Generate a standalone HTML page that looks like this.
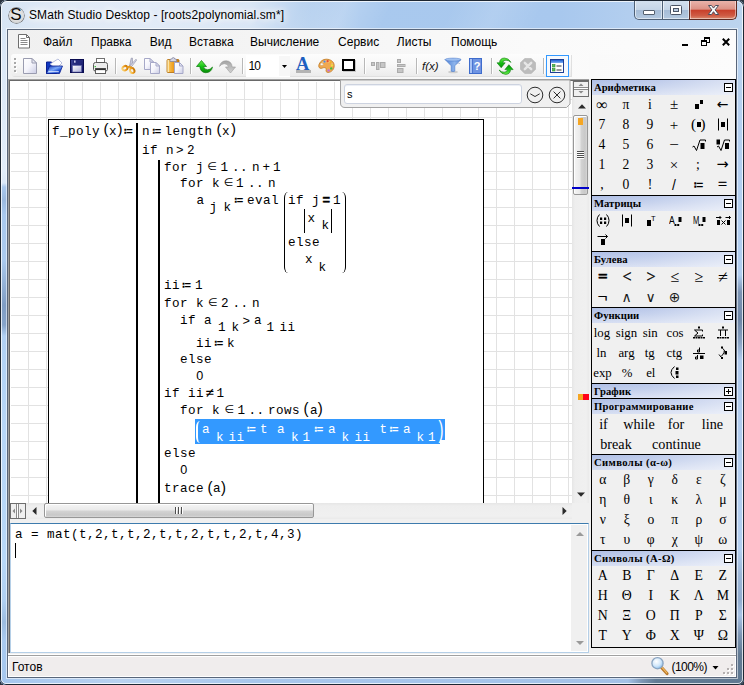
<!DOCTYPE html>
<html lang="ru"><head><meta charset="utf-8"><title>SMath Studio Desktop - [roots2polynomial.sm*]</title>
<style>
html,body{margin:0;padding:0;width:744px;height:685px;overflow:hidden;background:#2b3440;}
body{position:relative;font-family:"Liberation Sans",sans-serif;font-size:12px;color:#000;}
.a{position:absolute;}
.t{position:absolute;white-space:pre;line-height:16px;}
#win{left:0;top:0;width:744px;height:685px;border-radius:7px 7px 6px 6px;overflow:hidden;background:#a9c9ee;}
#content{left:8px;top:30px;width:728px;height:647px;background:#f0f0f0;}
.ui{font-family:"Liberation Sans",sans-serif;font-size:12px;}
.mono{font-family:"Liberation Mono",monospace;font-size:12.6px;letter-spacing:0.44px;}
.asg{font-family:"DejaVu Sans Mono",monospace;font-size:15px;}
.elm{font-family:"DejaVu Sans",sans-serif;font-size:11px;}
.neq{font-family:"DejaVu Sans Mono",monospace;font-size:14px;}
.par{font-family:"Liberation Sans",sans-serif;font-size:15px;line-height:16px;transform-origin:0 0;}
.ser{font-family:"Liberation Serif",serif;font-size:13.6px;line-height:20px;text-align:center;}
.hd{font-family:"Liberation Serif",serif;font-weight:bold;font-size:10.67px;line-height:15px;}
.ph{position:absolute;left:592px;width:143px;height:15px;background:linear-gradient(90deg,rgba(255,255,255,0) 0%,rgba(255,255,255,.15) 40%,rgba(255,255,255,.55) 100%),linear-gradient(180deg,#afbfe6 0%,#bccaea 40%,#d6def2 100%);border-top:1px solid #000;}
.bx{position:absolute;left:724px;width:7px;height:7px;border:1px solid #000;background:#fff;}
.bx i{position:absolute;left:1px;top:3px;width:5px;height:1px;background:#000;}
.bx b{position:absolute;left:3px;top:1px;width:1px;height:5px;background:#000;}
</style></head><body>
<div id="win" class="a">
<div class="a" style="left:0;top:0;width:744px;height:30px;background:linear-gradient(90deg,#d6e4f4 0px,#e0eaf6 60px,#e2ebf7 150px,#d9e6f5 250px,#b7d1ef 310px,#a9c9ee 360px,#a8c8ee 560px,#b4cfef 640px,#bcd4ee 744px);"></div>
<div class="a" style="left:0;top:0;width:744px;height:30px;background:linear-gradient(115deg,rgba(255,255,255,0) 40%,rgba(255,255,255,.18) 46%,rgba(255,255,255,0) 52%,rgba(255,255,255,0) 60%,rgba(255,255,255,.12) 66%,rgba(255,255,255,0) 72%);"></div>
<div class="a" style="left:0;top:30px;width:8px;height:655px;background:linear-gradient(180deg,#d8e6f6 0px,#dde9f7 60px,#e2edf9 140px,#dbe8f7 153px,#a9c8ec 157px,#9bb9de 170px,#a9c9ee 185px,#aacaee 230px,#93b1d6 255px,#7f9dc4 275px,#86a4ca 295px,#b1d1f4 306px,#b7d6f7 400px,#b8d8f8 530px,#b0d0f2 570px,#9cbce0 592px,#a9caf0 610px,#a5c7ee 655px);"></div>
<div class="a" style="left:736px;top:30px;width:8px;height:655px;background:linear-gradient(180deg,#bcd4ee 0px,#b4cff0 100px,#b2cef0 245px,#7c94b4 262px,#6f87a8 290px,#8aa3c4 312px,#b0cbee 330px,#b4cff0 520px,#9db7d8 545px,#93aed0 570px,#a9c4e6 585px,#7d96b4 605px,#627a93 625px,#5f7891 655px);"></div>
<div class="a" style="left:0;top:677px;width:744px;height:8px;background:linear-gradient(90deg,#a5c6ee 0px,#b9d2f0 120px,#a9c7ec 250px,#a6c4ea 500px,#a4c1e6 628px,#7d96b4 642px,#627b94 656px,#5f7891 744px);"></div>
<div class="a" style="left:0;top:0;width:742px;height:683px;border:1px solid #1d2733;border-radius:7px 7px 6px 6px;"></div>
<div class="a" style="left:1px;top:1px;width:740px;height:681px;border:1px solid rgba(255,255,255,.75);border-radius:6px 6px 5px 5px;"></div>
<div class="a" style="left:6px;top:28px;width:730px;height:649px;border:1px solid rgba(255,255,255,.55);"></div>
<div class="a" style="left:7px;top:29px;width:728px;height:647px;border:1px solid #59667a;"></div>
<div class="a" style="left:8.500px;top:7.500px;width:15px;height:15px;border-radius:50%;background:radial-gradient(circle at 50% 45%,#ececec 0%,#dcdcdc 60%,#b4b4b4 100%);box-shadow:0 0 0 0.700px #6e6e6e;"></div>
<span class="t" style="left:10.300px;top:5px;font:17px/20px 'Liberation Sans',sans-serif;color:#0a0a0a;">S</span>
<span class="t ui" style="left:29px;top:7px;letter-spacing:0.08px;text-shadow:0 0 6px #fff,0 0 9px #fff,0 0 12px rgba(255,255,255,.9);">SMath Studio Desktop - [roots2polynomial.sm*]</span>
<div class="a" style="left:634px;top:1px;width:29px;height:19px;border:1px solid #4e6076;border-top:none;box-sizing:border-box;border-radius:0 0 0 5px;background:linear-gradient(180deg,#d3e0ee 0%,#c5d5e7 48%,#a6bcd6 52%,#b4c9e0 100%);box-shadow:inset 1px 0 0 rgba(255,255,255,.6),inset -1px -1px 0 rgba(255,255,255,.5);"></div>
<div class="a" style="left:662px;top:1px;width:28px;height:19px;border:1px solid #4e6076;border-top:none;box-sizing:border-box;background:linear-gradient(180deg,#d3e0ee 0%,#c5d5e7 48%,#a6bcd6 52%,#b4c9e0 100%);box-shadow:inset 1px 0 0 rgba(255,255,255,.6),inset -1px -1px 0 rgba(255,255,255,.5);"></div>
<div class="a" style="left:689px;top:1px;width:48px;height:19px;border:1px solid #5c2a22;border-top:none;box-sizing:border-box;border-radius:0 0 5px 0;background:linear-gradient(180deg,#e9b3aa 0%,#dc9286 45%,#c8402b 52%,#cf5a43 80%,#d98a6e 100%);box-shadow:inset 1px 0 0 rgba(255,255,255,.45),inset -1px -1px 0 rgba(255,255,255,.45);"></div>
<div class="a" style="left:643px;top:10px;width:10px;height:3px;background:#fff;border:1px solid #55606e;border-radius:1px;"></div>
<svg class="a" style="left:669px;top:4px" width="14" height="12" viewBox="0 0 14 12"><rect x="1.500" y="1.500" width="11" height="9" rx="1" fill="#fff" stroke="#4b5566"/><rect x="4.500" y="4.500" width="5" height="3" fill="#b9cbe0" stroke="#4b5566"/></svg>
<svg class="a" style="left:706px;top:4px" width="15" height="12" viewBox="0 0 15 12"><path d="M2.5 1.5h3l2 2.6 2-2.6h3l-3.4 4.4 3.6 4.6h-3.2l-2-2.8-2 2.8h-3.2l3.6-4.6z" fill="#fff" stroke="#4b4f5c" stroke-width="1"/></svg>
<div id="content" class="a"></div>
<div class="a" style="left:8px;top:30px;width:728px;height:49px;background:linear-gradient(90deg,#f0f0f0 0,#f3f3f3 200px,#fafafa 520px,#fcfcfc 728px);"></div>
<svg class="a" style="left:18px;top:34px" width="13" height="15" viewBox="0 0 13 15"><path d="M0.5 0.5h8l3 3v10.5h-11z" fill="#fff" stroke="#6e6e6e"/><path d="M8.5 0.5v3h3" fill="none" stroke="#6e6e6e"/><path d="M2.5 4.5h5M2.5 6.5h7M2.5 8.5h7M2.5 10.5h7" stroke="#8a8a8a"/></svg>
<span class="t ui" style="left:42.9px;top:34px;">Файл</span>
<span class="t ui" style="left:91.0px;top:34px;">Правка</span>
<span class="t ui" style="left:149.8px;top:34px;">Вид</span>
<span class="t ui" style="left:189.1px;top:34px;">Вставка</span>
<span class="t ui" style="left:250.0px;top:34px;">Вычисление</span>
<span class="t ui" style="left:338.1px;top:34px;">Сервис</span>
<span class="t ui" style="left:396.8px;top:34px;">Листы</span>
<span class="t ui" style="left:451.0px;top:34px;">Помощь</span>
<div class="a" style="left:682px;top:44px;width:6px;height:2px;background:#000;"></div>
<div class="a" style="left:704px;top:37px;width:4px;height:3px;border:1px solid #000;border-top:2px solid #000;"></div>
<div class="a" style="left:701px;top:40px;width:4px;height:3px;border:1px solid #000;border-top:2px solid #000;background:#fafafa;"></div>
<svg class="a" style="left:722px;top:38px" width="8" height="8" viewBox="0 0 8 8"><path d="M0.800 0.800l6.400 6.400M7.200 0.800l-6.400 6.400" stroke="#000" stroke-width="2"/></svg>
<div class="a" style="left:11px;top:54px;width:560px;height:22px;border-radius:3px 0 0 3px;background:linear-gradient(180deg,#fdfdfd 0%,#f8f8f8 45%,#ececec 100%);box-shadow:1px 1px 0 #e0e0e0;"></div>
<div class="a" style="left:14px;top:58px;width:2px;height:2px;background:#a8a8a8;box-shadow:1px 1px 0 #fff;"></div>
<div class="a" style="left:14px;top:62px;width:2px;height:2px;background:#a8a8a8;box-shadow:1px 1px 0 #fff;"></div>
<div class="a" style="left:14px;top:66px;width:2px;height:2px;background:#a8a8a8;box-shadow:1px 1px 0 #fff;"></div>
<div class="a" style="left:14px;top:70px;width:2px;height:2px;background:#a8a8a8;box-shadow:1px 1px 0 #fff;"></div>
<div class="a" style="left:115px;top:58px;width:1px;height:16px;background:#b8b8b8;box-shadow:1px 0 0 #fff;"></div>
<div class="a" style="left:190px;top:58px;width:1px;height:16px;background:#b8b8b8;box-shadow:1px 0 0 #fff;"></div>
<div class="a" style="left:242px;top:58px;width:1px;height:16px;background:#b8b8b8;box-shadow:1px 0 0 #fff;"></div>
<div class="a" style="left:364px;top:58px;width:1px;height:16px;background:#b8b8b8;box-shadow:1px 0 0 #fff;"></div>
<div class="a" style="left:416px;top:58px;width:1px;height:16px;background:#b8b8b8;box-shadow:1px 0 0 #fff;"></div>
<div class="a" style="left:491px;top:58px;width:1px;height:16px;background:#b8b8b8;box-shadow:1px 0 0 #fff;"></div>
<div class="a" style="left:543px;top:58px;width:1px;height:16px;background:#b8b8b8;box-shadow:1px 0 0 #fff;"></div>
<svg class="a" width="0" height="0"><defs><linearGradient id="gpage" x1="0" y1="0" x2="1" y2="1"><stop offset="0" stop-color="#fff"/><stop offset=".5" stop-color="#f4f4fb"/><stop offset="1" stop-color="#c9cbe4"/></linearGradient><linearGradient id="gfold" x1="0" y1="0" x2="1" y2="1"><stop offset="0" stop-color="#0a2fb8"/><stop offset=".45" stop-color="#7aa8f8"/><stop offset=".7" stop-color="#1c50d8"/><stop offset="1" stop-color="#0a2aa0"/></linearGradient><linearGradient id="gsave" x1="0" y1="0" x2="1" y2="1"><stop offset="0" stop-color="#3a4296"/><stop offset="1" stop-color="#0c1060"/></linearGradient><linearGradient id="glab" x1="0" y1="0" x2="1" y2="1"><stop offset="0" stop-color="#fff"/><stop offset="1" stop-color="#a9abd6"/></linearGradient><linearGradient id="gor" x1="0" y1="0" x2="1" y2="0"><stop offset="0" stop-color="#f8d070"/><stop offset=".5" stop-color="#f0a020"/><stop offset="1" stop-color="#c87808"/></linearGradient><linearGradient id="ggr" x1="0" y1="0" x2="0" y2="1"><stop offset="0" stop-color="#70ec50"/><stop offset=".5" stop-color="#14c414"/><stop offset="1" stop-color="#0a8a0a"/></linearGradient><linearGradient id="ggy" x1="0" y1="0" x2="0" y2="1"><stop offset="0" stop-color="#d2d2d2"/><stop offset="1" stop-color="#a4a4a4"/></linearGradient><linearGradient id="gfun" x1="0" y1="0" x2="1" y2="0"><stop offset="0" stop-color="#4f82d6"/><stop offset=".6" stop-color="#8db4ec"/><stop offset="1" stop-color="#5a8ad8"/></linearGradient><linearGradient id="gbar" x1="0" y1="0" x2="0" y2="1"><stop offset="0" stop-color="#1e5fd0"/><stop offset="1" stop-color="#7eb0f4"/></linearGradient></defs></svg>
<svg class="a" style="left:23px;top:58px" width="14" height="16" viewBox="0 0 14 16"><path d="M0.5 0.5h8.5l4.5 4.5v10.5h-13z" fill="url(#gpage)" stroke="#9a9cb0"/><path d="M9 0.5v4.5h4.5z" fill="#e8e9f4" stroke="#9a9cb0" stroke-linejoin="round"/></svg>
<svg class="a" style="left:46px;top:58px" width="17" height="16" viewBox="0 0 17 16"><path d="M0.5 4h5l1 1.5h4v10h-10z" fill="#1038c0" stroke="#0a1e90"/><path d="M4 6l8-5 4 4-6 6z" fill="#fff" stroke="#9aa4d0" stroke-width=".7"/><path d="M3.5 8h13l-3 7.5h-13z" fill="url(#gfold)" stroke="#0a1e90" stroke-width=".8"/><path d="M2.5 13.7h10.3" stroke="#dfe8ff" stroke-width="1"/></svg>
<svg class="a" style="left:70px;top:59px" width="14" height="14" viewBox="0 0 14 14"><rect x="0.5" y="0.5" width="13" height="13" fill="url(#gsave)" stroke="#0a0c50"/><rect x="3" y="1" width="8" height="4" fill="#23287c"/><rect x="4" y="1.5" width="1.6" height="2.2" fill="#c8caee"/><rect x="2.5" y="6.5" width="9" height="6.5" fill="url(#glab)" stroke="#6064a8" stroke-width=".6"/></svg>
<svg class="a" style="left:92px;top:58px" width="17" height="16" viewBox="0 0 17 16"><rect x="4.5" y="0.5" width="8" height="6" fill="#fff" stroke="#707070"/><path d="M1.5 6.5q0-2 2-2h10q2 0 2 2v5q0 1.5-2 1.5h-10q-2 0-2-1.5z" fill="#ececec" stroke="#585858"/><rect x="3.5" y="10.5" width="10" height="5" fill="#fff" stroke="#606060"/><rect x="3.5" y="10.5" width="10" height="1.6" fill="#303030"/><rect x="2.6" y="8" width="1.2" height="1.2" fill="#18c018"/></svg>
<svg class="a" style="left:121px;top:57px" width="16" height="17" viewBox="0 0 16 17"><path d="M10.2 1.2l1.2-.2.2 6-2 3.4-1.2-1z" fill="#c8cadc" stroke="#8a8ca4" stroke-width=".6"/><path d="M15 2.2l.6 1-5.2 6.6-1.6 1-.2-1.6z" fill="#dcdcec" stroke="#8a8ca4" stroke-width=".6"/><ellipse cx="3.9" cy="11.2" rx="2.6" ry="2.1" fill="none" stroke="url(#gor)" stroke-width="2" transform="rotate(-25 3.9 11.2)"/><ellipse cx="11.2" cy="13.6" rx="2.1" ry="2.6" fill="none" stroke="url(#gor)" stroke-width="2" transform="rotate(-25 11.2 13.6)"/><path d="M6 10.4l3.3-.9M10 11.2l-.6-1.8" stroke="#e89818" stroke-width="2"/></svg>
<svg class="a" style="left:144px;top:58px" width="17" height="16" viewBox="0 0 17 16"><path d="M0.5 0.5h5.5l3.5 3.5v7.5h-9z" fill="url(#gpage)" stroke="#a6a8c8"/><path d="M6 0.5v3.5h3.5z" fill="#e4e6f4" stroke="#a6a8c8" stroke-linejoin="round"/><path d="M6.5 4.5h5.5l3.5 3.5v7.5h-9z" fill="url(#gpage)" stroke="#a6a8c8"/><path d="M12 4.5v3.5h3.5z" fill="#e4e6f4" stroke="#a6a8c8" stroke-linejoin="round"/></svg>
<svg class="a" style="left:166px;top:57px" width="18" height="17" viewBox="0 0 18 17"><rect x="1" y="2.5" width="12" height="13" rx="1" fill="url(#gor)" stroke="#b06a08" stroke-width=".8"/><rect x="1.6" y="3" width="1.4" height="12" fill="#fbe4a8"/><path d="M4 4.5v-1.5q0-1 1.2-1h.6q.2-1.4 1.5-1.4t1.5 1.4h.6q1.2 0 1.2 1v1.5z" fill="#d4d6e6" stroke="#7c7e98" stroke-width=".7"/><path d="M8.500 5.500h5l3.500 3.500v7.500h-8.500z" fill="url(#gpage)" stroke="#a6a8c8"/><path d="M13.500 5.500v3.500h3.500z" fill="#e4e6f4" stroke="#a6a8c8" stroke-linejoin="round"/></svg>
<svg class="a" style="left:195.5px;top:59.5px" width="17" height="14" viewBox="0 0 17 14"><path d="M5.5 0.5l5 6h-3q.3 3 4.2 3.3 2.6 0 4.8-2.700-1.200 5.600-6.800 5.600-5.300-.3-5.900-6.200h-3.300z" fill="url(#ggr)" stroke="#0a7a0a" stroke-width=".7" stroke-linejoin="round"/></svg>
<svg class="a" style="left:218.5px;top:59.5px" width="17" height="14" viewBox="0 0 17 14"><g transform="translate(17,13.5) rotate(180)"><path d="M5.5 0.5l5 6h-3q.3 3 4.2 3.3 2.6 0 4.8-2.700-1.200 5.600-6.800 5.600-5.300-.3-5.900-6.200h-3.300z" fill="url(#ggy)" stroke="#9c9c9c" stroke-width=".6" stroke-linejoin="round"/></g></svg>
<div class="a" style="left:246px;top:55px;width:44px;height:22px;background:#fff;"></div>
<div class="a" style="left:279px;top:56px;width:11px;height:20px;background:#f7f7f7;"></div>
<span class="t ui" style="left:248.500px;top:58px;letter-spacing:-0.800px;">10</span>
<svg class="a" style="left:282px;top:65px" width="5" height="3" viewBox="0 0 5 3"><path d="M0 0h5l-2.500 3z" fill="#000"/></svg>
<span class="t" style="left:296px;top:53.500px;font:bold 18.500px/20px 'Liberation Serif',serif;color:#1e5fc0;">A</span>
<div class="a" style="left:296px;top:70px;width:15px;height:3px;background:#b4b4b4;"></div>
<svg class="a" style="left:318px;top:58px" width="17" height="16" viewBox="0 0 17 16"><path d="M8.2 1.2c4.500 0 8 2.600 8 6.400 0 3.600-2.600 6.800-6.200 6.800-2 0-2.200-1.400-1.800-2.600.4-1.400-.6-2.200-2-2.200-1.600 0-2.600 1.200-4.200.6-1.400-.6-1.600-2.400-.8-4.200 1.200-2.800 3.800-4.800 7-4.800z" fill="#f0a850" stroke="#c07820" stroke-width=".8"/><path d="M8 2.200c3.500 0 6.500 1.600 7.200 4.400-2-2.200-8-3.600-12-.8 1-2.200 2.800-3.600 4.800-3.600z" fill="#f8cc90" opacity=".8"/><ellipse cx="3.800" cy="6.200" rx="1.500" ry="1.200" fill="#fff" stroke="#b08040" stroke-width=".4"/><circle cx="6.500" cy="3.600" r="1.150" fill="#4a8ae8"/><circle cx="9.600" cy="3.200" r="1.150" fill="#e84a30"/><circle cx="12.600" cy="4.400" r="1.150" fill="#f0b020"/><circle cx="14" cy="7.400" r="1.150" fill="#f0e040"/><circle cx="13.200" cy="10.400" r="1.200" fill="#40c040"/><circle cx="10.600" cy="12.400" r="1.200" fill="#c070e0"/></svg>
<div class="a" style="left:342px;top:59px;width:9px;height:8px;border:2.500px solid #000;background:#fff;box-shadow:1px 1px 0 #c8c8c8;"></div>
<svg class="a" style="left:371px;top:62px" width="15" height="8" viewBox="0 0 15 8"><rect x="0.5" y="0.5" width="3" height="3" fill="#c6c6c6" stroke="#ababab"/><rect x="5.500" y="0.5" width="2.500" height="7" fill="#c6c6c6" stroke="#ababab"/><rect x="9.500" y="0.5" width="4.500" height="5" fill="#c6c6c6" stroke="#ababab"/></svg>
<svg class="a" style="left:397px;top:59px" width="9" height="14" viewBox="0 0 9 14"><rect x="0.5" y="0.5" width="3" height="3" fill="#c6c6c6" stroke="#ababab"/><rect x="0.5" y="5.500" width="7.500" height="2" fill="#c6c6c6" stroke="#ababab"/><rect x="0.5" y="9.500" width="5.500" height="4" fill="#c6c6c6" stroke="#ababab"/></svg>
<span class="t" style="left:422px;top:57.500px;font:italic 11.500px/16px 'Liberation Sans',sans-serif;color:#111;">f(x)</span>
<svg class="a" style="left:444px;top:57px" width="18" height="17" viewBox="0 0 18 17"><ellipse cx="9" cy="15" rx="5" ry="1.300" fill="#cfcfcf"/><path d="M1 2.500h16l-6.200 6.300v5.400q-1.800.8-3.600 0v-5.400z" fill="url(#gfun)" stroke="#4a78c8" stroke-width=".6"/><ellipse cx="9" cy="2.600" rx="8" ry="1.500" fill="#9fc0f0" stroke="#4a78c8" stroke-width=".5"/><path d="M13 6.500q2.500-1.500 3 .5" fill="none" stroke="#9ab0d8" stroke-width=".8"/></svg>
<svg class="a" style="left:469px;top:58px" width="13" height="16" viewBox="0 0 13 16"><rect x="0.5" y="0.5" width="12" height="15" fill="#6f94e2" stroke="#3e6ccc"/><rect x="1" y="1" width="2.200" height="14" fill="#a8c2f4"/><rect x="3.200" y="1" width=".8" height="14" fill="#3e6ccc"/><text x="8" y="12" font-family="Liberation Sans,sans-serif" font-size="11" font-weight="bold" fill="#fff" text-anchor="middle">?</text></svg>
<svg class="a" style="left:494px;top:54px" width="22" height="24" viewBox="0 0 22 24"><path d="M17 8.400q-2.400-4.400-6.600-4.400-4.600.200-4.900 4.800h-2.500l4.200 4.900 4-4.900h-2.500q.300-2.600 3.300-2.600 2.700 0 5 2.200z" fill="url(#ggr)" stroke="#0a7a0a" stroke-width=".6" stroke-linejoin="round"/><path d="M17 8.400q-2.400-4.400-6.600-4.400-4.600.200-4.900 4.800h-2.500l4.200 4.900 4-4.900h-2.500q.300-2.600 3.300-2.600 2.700 0 5 2.200z" transform="rotate(180 11.050 12.200)" fill="url(#ggr)" stroke="#0a7a0a" stroke-width=".6" stroke-linejoin="round"/></svg>
<svg class="a" style="left:520px;top:58px" width="16" height="16" viewBox="0 0 16 16"><path d="M4.800 0.400h6.400l4.400 4.400v6.400l-4.400 4.400h-6.400l-4.400-4.400v-6.400z" fill="#bcbcbc" stroke="#b0b0b0" stroke-width=".6"/><path d="M4.800 4.800l6.400 6.400M11.200 4.800l-6.400 6.400" stroke="#e6e6e6" stroke-width="2.400" stroke-linecap="round"/></svg>
<div class="a" style="left:546px;top:55px;width:21px;height:20px;border:1px solid #3399ff;background:#f6f9fd;"></div>
<svg class="a" style="left:550px;top:59px" width="14" height="14" viewBox="0 0 14 14"><rect x="0.5" y="0.5" width="13" height="13" fill="#fff" stroke="#1c3f94"/><rect x="1" y="1" width="12" height="3" fill="url(#gbar)"/><rect x="2.500" y="5.500" width="2.500" height="2.500" fill="#58c058" stroke="#2a8a2a" stroke-width=".6"/><rect x="2.500" y="9.500" width="2.500" height="2.500" fill="#58c058" stroke="#2a8a2a" stroke-width=".6"/><path d="M6.500 7h5M6.500 11h5" stroke="#333" stroke-width="1"/></svg>
<div class="a" style="left:8px;top:79px;width:582px;height:575px;background:#f0f0f0;"></div>
<div class="a" style="left:8px;top:79px;width:581px;height:573px;border-left:1px solid #a0a0a0;border-top:1px solid #a0a0a0;"></div>
<div class="a" style="left:9px;top:80px;width:580px;height:572px;border-left:1px solid #696969;border-top:1px solid #696969;"></div>
<div class="a" style="left:10px;top:81px;width:562px;height:422px;background-color:#fff;background-image:linear-gradient(90deg,transparent 17px,#e2e2e2 17px),linear-gradient(180deg,transparent 17px,#e2e2e2 17px);background-size:18px 18px,18px 18px;background-position:1px 0,0 1px;"></div>
<div class="a" style="left:10px;top:81px;width:1px;height:422px;background:#fff;"></div>
<div class="a" style="left:10px;top:81px;width:562px;height:1px;background:#fff;"></div>
<div class="a" style="left:48px;top:119px;width:434px;height:390px;border:1px solid #000;background:#fff;clip-path:inset(0 0 7px 0);"></div>
<span class="t mono" style="left:52px;top:124px;">f_poly</span>
<span class="t par" style="left:103.5px;top:120.93px;color:#000;transform:scaleY(1.036);">(</span>
<span class="t mono" style="left:109px;top:124px;">x</span>
<span class="t par" style="left:117.5px;top:120.93px;color:#000;transform:scaleY(1.036);">)</span>
<span class="t asg" style="left:124px;top:123px;">≔</span>
<div class="a" style="left:136px;top:123px;width:2px;height:380px;background:#000;"></div>
<span class="t mono" style="left:142px;top:124px;">n</span>
<span class="t asg" style="left:152.5px;top:123px;">≔</span>
<span class="t mono" style="left:164.5px;top:124px;">length</span>
<span class="t par" style="left:216.5px;top:120.93px;color:#000;transform:scaleY(1.036);">(</span>
<span class="t mono" style="left:222px;top:124px;">x</span>
<span class="t par" style="left:231px;top:120.93px;color:#000;transform:scaleY(1.036);">)</span>
<span class="t mono" style="left:142px;top:143px;">if n</span>
<span class="t mono" style="left:176px;top:143px;">&gt;</span>
<span class="t mono" style="left:187px;top:143px;">2</span>
<div class="a" style="left:158px;top:160px;width:2px;height:343px;background:#000;"></div>
<span class="t mono" style="left:164px;top:160px;">for j</span>
<span class="t elm" style="left:207.2px;top:159.2px;">∈</span>
<span class="t mono" style="left:220.5px;top:160px;">1</span>
<span class="t mono" style="left:232px;top:160px;">..</span>
<span class="t mono" style="left:252px;top:160px;">n</span>
<span class="t mono" style="left:262.5px;top:160px;">+</span>
<span class="t mono" style="left:273px;top:160px;">1</span>
<span class="t mono" style="left:180px;top:176px;">for k</span>
<span class="t elm" style="left:223.8px;top:175.2px;">∈</span>
<span class="t mono" style="left:236px;top:176px;">1</span>
<span class="t mono" style="left:248px;top:176px;">..</span>
<span class="t mono" style="left:268px;top:176px;">n</span>
<span class="t mono" style="left:196.5px;top:193px;">a</span>
<span class="t mono" style="left:209.5px;top:200px;">j</span>
<span class="t mono" style="left:223.5px;top:200px;">k</span>
<span class="t asg" style="left:234.5px;top:192px;">≔</span>
<span class="t mono" style="left:247px;top:193px;">eval</span>
<div class="a" style="left:284px;top:192px;width:4px;height:81px;border-left:1px solid #000;border-radius:4px 0 0 4px / 6px 0 0 6px;"></div>
<div class="a" style="left:341px;top:192px;width:4px;height:81px;border-right:1px solid #000;border-radius:0 4px 4px 0 / 0 6px 6px 0;"></div>
<span class="t mono" style="left:288px;top:193px;">if j</span>
<span class="t mono" style="left:322.5px;top:193px;font-weight:bold;-webkit-text-stroke:0.5px #000;">=</span>
<span class="t mono" style="left:333px;top:193px;">1</span>
<div class="a" style="left:304px;top:209px;width:1px;height:24px;background:#000;"></div>
<span class="t mono" style="left:307.5px;top:211px;">x</span>
<span class="t mono" style="left:321.5px;top:218px;">k</span>
<div class="a" style="left:331px;top:209px;width:1px;height:24px;background:#000;"></div>
<span class="t mono" style="left:288px;top:235px;">else</span>
<span class="t mono" style="left:305px;top:252px;">x</span>
<span class="t mono" style="left:318.5px;top:259.5px;">k</span>
<span class="t mono" style="left:164px;top:278px;">ii</span>
<span class="t asg" style="left:182.3px;top:277px;">≔</span>
<span class="t mono" style="left:195px;top:278px;">1</span>
<span class="t mono" style="left:164px;top:296px;">for k</span>
<span class="t elm" style="left:208px;top:295.2px;">∈</span>
<span class="t mono" style="left:221px;top:296px;">2</span>
<span class="t mono" style="left:232.5px;top:296px;">..</span>
<span class="t mono" style="left:252px;top:296px;">n</span>
<span class="t mono" style="left:180px;top:313px;">if a</span>
<span class="t mono" style="left:218px;top:320px;">1</span>
<span class="t mono" style="left:231.5px;top:320px;">k</span>
<span class="t mono" style="left:242.5px;top:313.5px;">&gt;</span>
<span class="t mono" style="left:254px;top:313px;">a</span>
<span class="t mono" style="left:266.5px;top:320px;">1</span>
<span class="t mono" style="left:279.5px;top:320px;">ii</span>
<span class="t mono" style="left:196px;top:336px;">ii</span>
<span class="t asg" style="left:214.5px;top:335px;">≔</span>
<span class="t mono" style="left:227px;top:336px;">k</span>
<span class="t mono" style="left:180px;top:352px;">else</span>
<span class="t mono" style="left:196.3px;top:368px;font-family:'Liberation Sans',sans-serif;">0</span>
<span class="t mono" style="left:164px;top:386px;">if ii</span>
<span class="t neq" style="left:205.5px;top:384px;">≠</span>
<span class="t mono" style="left:216.5px;top:386px;">1</span>
<span class="t mono" style="left:180px;top:403px;">for k</span>
<span class="t elm" style="left:224.5px;top:402.2px;">∈</span>
<span class="t mono" style="left:237.5px;top:403px;">1</span>
<span class="t mono" style="left:248.5px;top:403px;">..</span>
<span class="t mono" style="left:268px;top:403px;">rows</span>
<span class="t par" style="left:303.5px;top:399.21px;color:#000;transform:scaleY(1.143);">(</span>
<span class="t mono" style="left:310px;top:403px;">a</span>
<span class="t par" style="left:317.8px;top:399.21px;color:#000;transform:scaleY(1.143);">)</span>
<div class="a" style="left:195px;top:419px;width:245px;height:25px;background:#3399ff;"></div>
<div class="a" style="left:440px;top:419px;width:5px;height:21px;background:#3399ff;"></div>
<div class="a" style="left:196px;top:420.500px;width:4px;height:22px;border-left:2px solid #fff;border-radius:4px 0 0 4px / 6px 0 0 6px;"></div>
<span class="t mono" style="left:202px;top:422px;color:#fff;">a</span>
<span class="t mono" style="left:216px;top:430px;color:#fff;">k</span>
<span class="t mono" style="left:228.5px;top:430px;color:#fff;">ii</span>
<span class="t asg" style="left:247px;top:421px;color:#fff;">≔</span>
<span class="t mono" style="left:260px;top:422px;color:#fff;">t</span>
<span class="t mono" style="left:277px;top:422px;color:#fff;">a</span>
<span class="t mono" style="left:291px;top:430px;color:#fff;">k</span>
<span class="t mono" style="left:302.5px;top:430px;color:#fff;">1</span>
<span class="t asg" style="left:314.5px;top:421px;color:#fff;">≔</span>
<span class="t mono" style="left:328px;top:422px;color:#fff;">a</span>
<span class="t mono" style="left:341.5px;top:430px;color:#fff;">k</span>
<span class="t mono" style="left:354.5px;top:430px;color:#fff;">ii</span>
<span class="t mono" style="left:379.5px;top:422px;color:#fff;">t</span>
<span class="t asg" style="left:389.7px;top:421px;color:#fff;">≔</span>
<span class="t mono" style="left:403px;top:422px;color:#fff;">a</span>
<span class="t mono" style="left:416.5px;top:430px;color:#fff;">k</span>
<span class="t mono" style="left:428px;top:430px;color:#fff;">1</span>
<span class="t par" style="left:438.5px;top:417.29px;color:#fff;transform:scaleY(1.607);">)</span>
<span class="t mono" style="left:164px;top:446px;">else</span>
<span class="t mono" style="left:180.3px;top:462px;font-family:'Liberation Sans',sans-serif;">0</span>
<span class="t mono" style="left:164px;top:481px;">trace</span>
<span class="t par" style="left:207.5px;top:477.71px;color:#000;transform:scaleY(1.143);">(</span>
<span class="t mono" style="left:213px;top:481px;">a</span>
<span class="t par" style="left:221px;top:477.71px;color:#000;transform:scaleY(1.143);">)</span>
<svg class="a" style="left:339px;top:80px" width="233" height="29" viewBox="0 0 233 29"><path d="M1.5 0v23q0 4.500 4.500 4.500h221.500l3.500-3.500v-24z" fill="#f0f0f0" stroke="#a3a3a3"/></svg>
<div class="a" style="left:344px;top:84px;width:176px;height:18px;border:1px solid #cdd3e0;border-radius:3px;background:#fff;box-shadow:inset 0 1px 0 #eceff5;"></div>
<span class="t ui" style="left:347px;top:86px;font-size:11px;">s</span>
<svg class="a" style="left:526px;top:86px" width="40" height="18" viewBox="0 0 40 18"><circle cx="9" cy="9" r="7.800" fill="#f0f0f0" stroke="#2c2c2c" stroke-width="1"/><path d="M4.300 7.800l4.700 2.700 4.700-2.700" fill="none" stroke="#2c2c2c" stroke-width="1"/><circle cx="31" cy="9" r="7.800" fill="#f0f0f0" stroke="#2c2c2c" stroke-width="1"/><path d="M27.600 5.600l6.800 6.800M34.400 5.600l-6.800 6.800" stroke="#2c2c2c" stroke-width="1"/></svg>
<div class="a" style="left:572px;top:81px;width:17px;height:422px;background:linear-gradient(90deg,#e6e6e6 0,#eeeeee 3px,#f0f0f0 14px,#eaeaea 17px);"></div>
<div class="a" style="left:573px;top:81px;width:14px;height:14px;border:1px solid #6e6e6e;background:#f0f0f0;"></div>
<div class="a" style="left:574px;top:87px;width:14px;height:1px;background:#8c8c8c;box-shadow:0 1px 0 #fff,0 2px 0 #8c8c8c;"></div>
<svg class="a" style="left:578px;top:83px" width="6" height="11" viewBox="0 0 6 11"><path d="M0.500 3l2.500-2.500 2.500 2.500zM0.500 8l2.500 2.500 2.500-2.500z" fill="#8a8a8a"/></svg>
<svg class="a" style="left:577.500px;top:103.500px" width="8" height="5" viewBox="0 0 8 5"><path d="M0 4.500l4-4.200 4 4.200z" fill="#2a2a2a"/></svg>
<div class="a" style="left:573px;top:115px;width:13px;height:78px;border:1px solid #979797;border-radius:2px;background:linear-gradient(90deg,#f5f5f5 0,#e9e9e9 48%,#d4d4d4 52%,#c8c8c8 85%,#d6d6d6 100%);box-shadow:inset 1px 1px 0 #fff;"></div>
<div class="a" style="left:577px;top:151px;width:7px;height:1px;background:#4e4e4e;box-shadow:0 1px 0 #fff;"></div>
<div class="a" style="left:577px;top:153px;width:7px;height:1px;background:#4e4e4e;box-shadow:0 1px 0 #fff;"></div>
<div class="a" style="left:577px;top:155px;width:7px;height:1px;background:#4e4e4e;box-shadow:0 1px 0 #fff;"></div>
<div class="a" style="left:577px;top:157px;width:7px;height:1px;background:#4e4e4e;box-shadow:0 1px 0 #fff;"></div>
<div class="a" style="left:578px;top:118px;width:5px;height:7px;background:#f5a623;"></div>
<div class="a" style="left:572px;top:187px;width:17px;height:2px;background:#0000c8;"></div>
<div class="a" style="left:578px;top:394px;width:5px;height:6px;background:#f5a623;"></div>
<div class="a" style="left:583px;top:394px;width:6px;height:6px;background:#ff0018;"></div>
<svg class="a" style="left:577px;top:492px" width="8" height="5" viewBox="0 0 8 5"><path d="M0 0.500h8l-4 4.200z" fill="#2a2a2a"/></svg>
<div class="a" style="left:10px;top:503px;width:579px;height:16px;background:linear-gradient(180deg,#e6e6e6 0,#eeeeee 3px,#f0f0f0 13px,#eaeaea 16px);"></div>
<div class="a" style="left:572px;top:503px;width:17px;height:16px;background:#f0f0f0;"></div>
<div class="a" style="left:10px;top:503px;width:14px;height:14px;border:1px solid #6e6e6e;background:#f0f0f0;"></div>
<div class="a" style="left:16px;top:504px;width:1px;height:14px;background:#8c8c8c;box-shadow:1px 0 0 #fff,2px 0 0 #8c8c8c;"></div>
<svg class="a" style="left:12px;top:508px" width="11" height="6" viewBox="0 0 11 6"><path d="M3 0.500l-2.500 2.500 2.500 2.500zM8 0.500l2.500 2.500-2.500 2.500z" fill="#8a8a8a"/></svg>
<svg class="a" style="left:31.500px;top:506.500px" width="5" height="8" viewBox="0 0 5 8"><path d="M4.500 0l-4.200 4 4.200 4z" fill="#2a2a2a"/></svg>
<div class="a" style="left:44px;top:503px;width:268px;height:13px;border:1px solid #979797;border-radius:2px;background:linear-gradient(180deg,#f5f5f5 0,#e9e9e9 48%,#d4d4d4 52%,#c8c8c8 85%,#d6d6d6 100%);box-shadow:inset 1px 1px 0 #fff;"></div>
<div class="a" style="left:175px;top:507px;width:1px;height:7px;background:#4e4e4e;box-shadow:1px 0 0 #fff;"></div>
<div class="a" style="left:178px;top:507px;width:1px;height:7px;background:#4e4e4e;box-shadow:1px 0 0 #fff;"></div>
<div class="a" style="left:181px;top:507px;width:1px;height:7px;background:#4e4e4e;box-shadow:1px 0 0 #fff;"></div>
<svg class="a" style="left:562px;top:506.500px" width="5" height="8" viewBox="0 0 5 8"><path d="M0.500 0l4.200 4-4.200 4z" fill="#2a2a2a"/></svg>
<div class="a" style="left:10px;top:523px;width:577px;height:128px;background:#fff;border:1px solid #b5cfe7;border-top-color:#3d7bad;"></div>
<div class="a" style="left:571px;top:525px;width:16px;height:126px;background:#f0f0f0;"></div>
<svg class="a" style="left:575.500px;top:531.500px" width="8" height="4" viewBox="0 0 8 4"><path d="M0 4l4-4 4 4z" fill="#9a9a9a"/></svg>
<svg class="a" style="left:575.500px;top:640.500px" width="8" height="4" viewBox="0 0 8 4"><path d="M0 0h8l-4 4z" fill="#9a9a9a"/></svg>
<span class="t mono" style="left:15px;top:527px;">a = mat(t,2,t,t,2,t,t,2,t,t,2,t,4,3)</span>
<div class="a" style="left:15px;top:543px;width:1px;height:15px;background:#000;"></div>
<div class="a" style="left:8px;top:654px;width:728px;height:1px;background:#fff;"></div>
<div class="a" style="left:8px;top:655px;width:728px;height:1px;background:#a0a0a0;"></div>
<div class="a" style="left:8px;top:656px;width:728px;height:21px;background:#f0eded;box-shadow:inset 1px 1px 0 #fff,inset -1px -1px 0 #fff;"></div>
<span class="t ui" style="left:12px;top:659px;">Готов</span>
<span class="t ui" style="left:671.500px;top:659px;letter-spacing:-0.550px;">(100%)</span>
<svg class="a" style="left:712px;top:666px" width="7" height="4" viewBox="0 0 7 4"><path d="M0.500 0h6l-3 3.500z" fill="#000"/></svg>
<svg class="a" style="left:650px;top:656px" width="20" height="20" viewBox="0 0 20 20"><defs><radialGradient id="gmag" cx=".4" cy=".35" r=".7"><stop offset="0" stop-color="#fff"/><stop offset=".6" stop-color="#cfe6fa"/><stop offset="1" stop-color="#7fb6e8"/></radialGradient></defs><path d="M11.500 11.500l5.500 6" stroke="#b9782a" stroke-width="3.200" stroke-linecap="round"/><path d="M11.800 11.200l5 5.600" stroke="#f0b860" stroke-width="1.200" stroke-linecap="round"/><circle cx="7.500" cy="7.200" r="5.600" fill="url(#gmag)" stroke="#8aa4c0" stroke-width="1.300"/></svg>
<div class="a" style="left:731px;top:664px;width:2px;height:2px;background:#b4b0b0;box-shadow:1px 1px 0 #fff;"></div>
<div class="a" style="left:727px;top:668px;width:2px;height:2px;background:#b4b0b0;box-shadow:1px 1px 0 #fff;"></div>
<div class="a" style="left:731px;top:668px;width:2px;height:2px;background:#b4b0b0;box-shadow:1px 1px 0 #fff;"></div>
<div class="a" style="left:723px;top:672px;width:2px;height:2px;background:#b4b0b0;box-shadow:1px 1px 0 #fff;"></div>
<div class="a" style="left:727px;top:672px;width:2px;height:2px;background:#b4b0b0;box-shadow:1px 1px 0 #fff;"></div>
<div class="a" style="left:731px;top:672px;width:2px;height:2px;background:#b4b0b0;box-shadow:1px 1px 0 #fff;"></div>
<div class="a" style="left:589px;top:79px;width:147px;height:575px;background:#f0f0f0;"></div>
<div class="a" style="left:589px;top:54px;width:147px;height:25px;background:linear-gradient(90deg,#fafafa,#fcfcfc);"></div>
<div class="a" style="left:591px;top:79px;width:143px;height:567px;border:1px solid #000;background:#f0f0f0;"></div>
<div class="ph" style="top:79px;height:15px;"></div>
<span class="t hd" style="left:594px;top:80px;">Арифметика</span>
<div class="bx" style="top:83px;"><i></i></div>
<div class="ph" style="top:195px;height:15px;"></div>
<span class="t hd" style="left:594px;top:196px;">Матрицы</span>
<div class="bx" style="top:199px;"><i></i></div>
<div class="ph" style="top:251px;height:15px;"></div>
<span class="t hd" style="left:594px;top:252px;">Булева</span>
<div class="bx" style="top:255px;"><i></i></div>
<div class="ph" style="top:307px;height:15px;"></div>
<span class="t hd" style="left:594px;top:308px;">Функции</span>
<div class="bx" style="top:311px;"><i></i></div>
<div class="ph" style="top:383px;height:14px;"></div>
<span class="t hd" style="left:594px;top:384px;">График</span>
<div class="bx" style="top:387px;"><i></i><b></b></div>
<div class="ph" style="top:398px;height:15px;"></div>
<span class="t hd" style="left:594px;top:399px;letter-spacing:0.27px;">Программирование</span>
<div class="bx" style="top:402px;"><i></i></div>
<div class="ph" style="top:454px;height:15px;"></div>
<span class="t hd" style="left:594px;top:455px;letter-spacing:0.38px;">Символы (α-ω)</span>
<div class="bx" style="top:458px;"><i></i></div>
<div class="ph" style="top:550px;height:15px;"></div>
<span class="t hd" style="left:594px;top:551px;letter-spacing:0.38px;">Символы (Α-Ω)</span>
<div class="bx" style="top:554px;"><i></i></div>
<span class="t ser" style="left:590px;top:95px;width:24px;font-size:16px;">∞</span>
<span class="t ser" style="left:614px;top:95px;width:24px;">π</span>
<span class="t ser" style="left:638px;top:95px;width:24px;">i</span>
<span class="t ser" style="left:662px;top:93.5px;width:24px;font-size:15px;">±</span>
<svg class="a" style="left:694px;top:99px" width="10" height="11" viewBox="0 0 10 11"><rect x="1" y="5" width="4" height="5" fill="#000"/><rect x="6" y="1" width="3" height="4" fill="#000"/></svg>
<span class="t ser" style="left:710.5px;top:94.2px;width:24px;font-size:14px;font-family:'DejaVu Sans',sans-serif;">←</span>
<span class="t ser" style="left:590px;top:115px;width:24px;">7</span>
<span class="t ser" style="left:614px;top:115px;width:24px;">8</span>
<span class="t ser" style="left:638px;top:115px;width:24px;">9</span>
<span class="t ser" style="left:662px;top:115px;width:24px;font-size:15px;">+</span>
<span class="t ser" style="left:681.5px;top:114px;width:24px;font-size:15px;">(</span>
<svg class="a" style="left:697px;top:122px" width="4" height="5" viewBox="0 0 4 5"><rect width="4" height="5" fill="#000"/></svg>
<span class="t ser" style="left:691px;top:114px;width:24px;font-size:15px;">)</span>
<svg class="a" style="left:717px;top:118px" width="12" height="13" viewBox="0 0 12 13"><path d="M1.500 0.500v12M10.500 0.500v12" stroke="#000" stroke-width="1"/><rect x="4" y="4" width="4" height="5" fill="#000"/></svg>
<span class="t ser" style="left:590px;top:135px;width:24px;">4</span>
<span class="t ser" style="left:614px;top:135px;width:24px;">5</span>
<span class="t ser" style="left:638px;top:135px;width:24px;">6</span>
<span class="t ser" style="left:662px;top:134.5px;width:24px;font-size:17px;">−</span>
<svg class="a" style="left:692px;top:139px" width="14" height="13" viewBox="0 0 14 13"><path d="M0.500 8l1.500-1 2.500 4.500 3.500-10.500h5.500v1.500" fill="none" stroke="#000" stroke-width="1"/><rect x="8.500" y="4" width="4" height="6" fill="#000"/></svg>
<svg class="a" style="left:716px;top:139px" width="14" height="13" viewBox="0 0 14 13"><rect x="0.500" y="0.500" width="3.500" height="5" fill="#000"/><path d="M1 8l1.500-1 2.500 4.500 3.500-10.500h5v1.500" fill="none" stroke="#000" stroke-width="1"/><rect x="9" y="4" width="4" height="6" fill="#000"/></svg>
<span class="t ser" style="left:590px;top:155px;width:24px;">1</span>
<span class="t ser" style="left:614px;top:155px;width:24px;">2</span>
<span class="t ser" style="left:638px;top:155px;width:24px;">3</span>
<span class="t ser" style="left:662px;top:155px;width:24px;font-size:15px;">×</span>
<span class="t ser" style="left:686px;top:155px;width:24px;">;</span>
<span class="t ser" style="left:710.5px;top:154.2px;width:24px;font-size:14.5px;font-family:'DejaVu Sans',sans-serif;">→</span>
<span class="t ser" style="left:590px;top:175px;width:24px;">,</span>
<span class="t ser" style="left:614px;top:175px;width:24px;">0</span>
<span class="t ser" style="left:638px;top:175px;width:24px;">!</span>
<span class="t ser" style="left:662px;top:175px;width:24px;font-size:14px;font-family:'Liberation Sans',sans-serif;">/</span>
<span class="t asg" style="left:693.500px;top:177px;font-size:16px;">≔</span>
<span class="t ser" style="left:710.5px;top:175px;width:24px;font-size:16px;-webkit-text-stroke:0.300px #000;">=</span>
<svg class="a" style="left:596px;top:214px" width="14" height="13" viewBox="0 0 14 13"><path d="M3.500 0.500q-2.500 2.500-2.500 6t2.500 6M10.500 0.500q2.500 2.500 2.500 6t-2.500 6" fill="none" stroke="#000" stroke-width="1"/><rect x="4" y="3.500" width="2.200" height="2.500" fill="#000"/><rect x="8" y="3.500" width="2.200" height="2.500" fill="#000"/><rect x="4" y="7.500" width="2.200" height="2.500" fill="#000"/><rect x="8" y="7.500" width="2.200" height="2.500" fill="#000"/></svg>
<svg class="a" style="left:621px;top:214px" width="12" height="13" viewBox="0 0 12 13"><path d="M1.500 0.500v12M10.500 0.500v12" stroke="#000" stroke-width="1"/><rect x="4" y="4" width="4" height="5" fill="#000"/></svg>
<svg class="a" style="left:646px;top:216px" width="11" height="11" viewBox="0 0 11 11"><rect x="1" y="4" width="4" height="6" fill="#000"/></svg>
<span class="t" style="left:651px;top:213.500px;font:7.500px/10px 'Liberation Sans',sans-serif;">T</span>
<span class="t" style="left:668.700px;top:213px;font:10.500px/14px 'Liberation Sans',sans-serif;transform:scaleX(.82);transform-origin:0 0;">A</span>
<svg class="a" style="left:674px;top:216px" width="8" height="11" viewBox="0 0 8 11"><rect x="0.500" y="8" width="2" height="2" fill="#000"/><rect x="3.200" y="8" width="2" height="2" fill="#000"/><rect x="4.500" y="1" width="3" height="5" fill="#000"/></svg>
<span class="t" style="left:692.500px;top:213px;font:10.500px/14px 'Liberation Sans',sans-serif;transform:scaleX(.72);transform-origin:0 0;">M</span>
<svg class="a" style="left:698px;top:216px" width="8" height="11" viewBox="0 0 8 11"><rect x="0.500" y="8" width="2" height="2" fill="#000"/><rect x="3.200" y="8" width="2" height="2" fill="#000"/><rect x="4.500" y="1" width="3" height="5" fill="#000"/></svg>
<svg class="a" style="left:716px;top:216px" width="15" height="10" viewBox="0 0 15 10"><path d="M0 1.500h5M3.500 0l1.500 1.500-1.500 1.500M9.500 1.500h5M13 0l1.500 1.500-1.500 1.500" fill="none" stroke="#000" stroke-width="1"/><rect x="1" y="4" width="3" height="5" fill="#000"/><rect x="11" y="4" width="3" height="5" fill="#000"/><path d="M5.500 4.500l4 4M9.500 4.500l-4 4" stroke="#000" stroke-width="1"/></svg>
<svg class="a" style="left:597px;top:234px" width="12" height="11" viewBox="0 0 12 11"><path d="M0.500 2.500h10M8.500 0.500l2 2-2 2" fill="none" stroke="#000" stroke-width="1"/><rect x="4" y="5" width="4" height="6" fill="#000"/></svg>
<span class="t ser" style="left:590.8px;top:266.5px;width:24px;font-size:17px;font-weight:bold;-webkit-text-stroke:0.600px #000;">=</span>
<span class="t ser" style="left:615px;top:266.5px;width:24px;font-size:16px;-webkit-text-stroke:0.300px #000;">&lt;</span>
<span class="t ser" style="left:639px;top:266.5px;width:24px;font-size:16px;-webkit-text-stroke:0.300px #000;">&gt;</span>
<span class="t ser" style="left:663px;top:267px;width:24px;font-size:16px;">≤</span>
<span class="t ser" style="left:687px;top:267px;width:24px;font-size:16px;">≥</span>
<span class="t ser" style="left:711px;top:266.5px;width:24px;font-size:18px;">≠</span>
<span class="t ser" style="left:590.5px;top:287px;width:24px;font-size:17px;-webkit-text-stroke:0.400px #000;">¬</span>
<span class="t ser" style="left:614.5px;top:286.5px;width:24px;font-size:14px;font-family:'DejaVu Sans',sans-serif;color:#1a1a1a;">∧</span>
<span class="t ser" style="left:638.5px;top:286.5px;width:24px;font-size:14px;font-family:'DejaVu Sans',sans-serif;color:#1a1a1a;">∨</span>
<span class="t ser" style="left:662.5px;top:286.5px;width:24px;font-size:14px;font-family:'DejaVu Sans',sans-serif;color:#1a1a1a;">⊕</span>
<span class="t ser" style="left:590px;top:323px;width:24px;font-size:12.8px;">log</span>
<span class="t ser" style="left:614.5px;top:323px;width:24px;font-size:12.8px;">sign</span>
<span class="t ser" style="left:638.3px;top:323px;width:24px;font-size:12.8px;">sin</span>
<span class="t ser" style="left:663px;top:323px;width:24px;font-size:12.8px;">cos</span>
<svg class="a" style="left:693px;top:326px" width="12" height="13" viewBox="0 0 12 13"><rect x="5" y="0.500" width="2" height="2" fill="#000"/><path d="M9.500 5.500v-1.500h-8l3.500 3-3.500 3h8v-1.500" fill="none" stroke="#000" stroke-width="1"/><path d="M0 11.800h12" stroke="#000" stroke-width="1.600" stroke-dasharray="2 0.500"/></svg>
<svg class="a" style="left:717px;top:326px" width="12" height="13" viewBox="0 0 12 13"><rect x="5" y="0.500" width="2" height="2" fill="#000"/><path d="M1 4h10M3.500 4v6M8.500 4v6" fill="none" stroke="#000" stroke-width="1"/><path d="M0 11.800h12" stroke="#000" stroke-width="1.600" stroke-dasharray="2 0.500"/></svg>
<span class="t ser" style="left:589.5px;top:343px;width:24px;font-size:12.8px;">ln</span>
<span class="t ser" style="left:614.5px;top:343px;width:24px;font-size:12.8px;">arg</span>
<span class="t ser" style="left:637.7px;top:343px;width:24px;font-size:12.8px;">tg</span>
<span class="t ser" style="left:662.3px;top:343px;width:24px;font-size:12.8px;">ctg</span>
<svg class="a" style="left:693px;top:347px" width="13" height="13" viewBox="0 0 13 13"><path d="M0 6.500h12" stroke="#000" stroke-width="1"/><path d="M6.500 0.500v4.500M6.500 3h-2v2h2" fill="none" stroke="#000" stroke-width="1"/><path d="M4.500 8v4M4.500 10h-2v2h2" fill="none" stroke="#000" stroke-width="1"/><rect x="7" y="8.500" width="3.500" height="3.500" fill="#000"/></svg>
<svg class="a" style="left:718px;top:346px" width="10" height="14" viewBox="0 0 10 14"><rect x="3" y="0.500" width="2" height="2" fill="#000"/><rect x="3" y="11" width="2" height="2" fill="#000"/><path d="M4.500 2.500q3 1 1.500 4t-3 4" fill="none" stroke="#000" stroke-width="1"/><rect x="6.500" y="5" width="2.500" height="3.500" fill="#000"/><path d="M1 8.500l2 2.500" stroke="#000"/></svg>
<span class="t ser" style="left:590.5px;top:363px;width:24px;font-size:12.8px;">exp</span>
<span class="t ser" style="left:615px;top:363px;width:24px;font-size:12.8px;">%</span>
<span class="t ser" style="left:638.8px;top:363px;width:24px;font-size:12.8px;">el</span>
<svg class="a" style="left:670px;top:366px" width="10" height="13" viewBox="0 0 10 13"><path d="M4.500 0.500q-3.500 3-3.500 6t3.500 6" fill="none" stroke="#000" stroke-width="1"/><rect x="6" y="1.500" width="2.500" height="2.500" fill="#000"/><rect x="5.500" y="5" width="3" height="3.500" fill="#000"/><rect x="6" y="9.500" width="2.500" height="2.500" fill="#000"/></svg>
<span class="t ser" style="left:573.5px;top:414px;width:60px;font-size:14.2px;">if</span>
<span class="t ser" style="left:609px;top:414px;width:60px;font-size:14.2px;">while</span>
<span class="t ser" style="left:646px;top:414px;width:60px;font-size:14.2px;">for</span>
<span class="t ser" style="left:682.5px;top:414px;width:60px;font-size:14.2px;">line</span>
<span class="t ser" style="left:586px;top:434px;width:60px;font-size:14.2px;">break</span>
<span class="t ser" style="left:646.5px;top:434px;width:60px;font-size:14.2px;">continue</span>
<span class="t ser" style="left:590.8px;top:469.5px;width:24px;font-size:13.6px;">α</span>
<span class="t ser" style="left:614.8px;top:469.5px;width:24px;font-size:13.6px;">β</span>
<span class="t ser" style="left:638.8px;top:469.5px;width:24px;font-size:13.6px;">γ</span>
<span class="t ser" style="left:662.8px;top:469.5px;width:24px;font-size:13.6px;">δ</span>
<span class="t ser" style="left:686.8px;top:469.5px;width:24px;font-size:13.6px;">ε</span>
<span class="t ser" style="left:710.8px;top:469.5px;width:24px;font-size:13.6px;">ζ</span>
<span class="t ser" style="left:590.8px;top:489.5px;width:24px;font-size:13.6px;">η</span>
<span class="t ser" style="left:614.8px;top:489.5px;width:24px;font-size:13.6px;">θ</span>
<span class="t ser" style="left:638.8px;top:489.5px;width:24px;font-size:13.6px;">ι</span>
<span class="t ser" style="left:662.8px;top:489.5px;width:24px;font-size:13.6px;">κ</span>
<span class="t ser" style="left:686.8px;top:489.5px;width:24px;font-size:13.6px;">λ</span>
<span class="t ser" style="left:710.8px;top:489.5px;width:24px;font-size:13.6px;">μ</span>
<span class="t ser" style="left:590.8px;top:509.5px;width:24px;font-size:13.6px;">ν</span>
<span class="t ser" style="left:614.8px;top:509.5px;width:24px;font-size:13.6px;">ξ</span>
<span class="t ser" style="left:638.8px;top:509.5px;width:24px;font-size:13.6px;">ο</span>
<span class="t ser" style="left:662.8px;top:509.5px;width:24px;font-size:13.6px;">π</span>
<span class="t ser" style="left:686.8px;top:509.5px;width:24px;font-size:13.6px;">ρ</span>
<span class="t ser" style="left:710.8px;top:509.5px;width:24px;font-size:13.6px;">σ</span>
<span class="t ser" style="left:590.8px;top:529.5px;width:24px;font-size:13.6px;">τ</span>
<span class="t ser" style="left:614.8px;top:529.5px;width:24px;font-size:13.6px;">υ</span>
<span class="t ser" style="left:638.8px;top:529.5px;width:24px;font-size:13.6px;">φ</span>
<span class="t ser" style="left:662.8px;top:529.5px;width:24px;font-size:13.6px;">χ</span>
<span class="t ser" style="left:686.8px;top:529.5px;width:24px;font-size:13.6px;">ψ</span>
<span class="t ser" style="left:710.8px;top:529.5px;width:24px;font-size:13.6px;">ω</span>
<span class="t ser" style="left:590.8px;top:565.5px;width:24px;font-size:13.8px;">Α</span>
<span class="t ser" style="left:614.8px;top:565.5px;width:24px;font-size:13.8px;">Β</span>
<span class="t ser" style="left:638.8px;top:565.5px;width:24px;font-size:13.8px;">Γ</span>
<span class="t ser" style="left:662.8px;top:565.5px;width:24px;font-size:13.8px;">Δ</span>
<span class="t ser" style="left:686.8px;top:565.5px;width:24px;font-size:13.8px;">Ε</span>
<span class="t ser" style="left:710.8px;top:565.5px;width:24px;font-size:13.8px;">Ζ</span>
<span class="t ser" style="left:590.8px;top:585.5px;width:24px;font-size:13.8px;">Η</span>
<span class="t ser" style="left:614.8px;top:585.5px;width:24px;font-size:13.8px;">Θ</span>
<span class="t ser" style="left:638.8px;top:585.5px;width:24px;font-size:13.8px;">Ι</span>
<span class="t ser" style="left:662.8px;top:585.5px;width:24px;font-size:13.8px;">Κ</span>
<span class="t ser" style="left:686.8px;top:585.5px;width:24px;font-size:13.8px;">Λ</span>
<span class="t ser" style="left:710.8px;top:585.5px;width:24px;font-size:13.8px;">Μ</span>
<span class="t ser" style="left:590.8px;top:605.5px;width:24px;font-size:13.8px;">Ν</span>
<span class="t ser" style="left:614.8px;top:605.5px;width:24px;font-size:13.8px;">Ξ</span>
<span class="t ser" style="left:638.8px;top:605.5px;width:24px;font-size:13.8px;">Ο</span>
<span class="t ser" style="left:662.8px;top:605.5px;width:24px;font-size:13.8px;">Π</span>
<span class="t ser" style="left:686.8px;top:605.5px;width:24px;font-size:13.8px;">Ρ</span>
<span class="t ser" style="left:710.8px;top:605.5px;width:24px;font-size:13.8px;">Σ</span>
<span class="t ser" style="left:590.8px;top:625.5px;width:24px;font-size:13.8px;">Τ</span>
<span class="t ser" style="left:614.8px;top:625.5px;width:24px;font-size:13.8px;">Υ</span>
<span class="t ser" style="left:638.8px;top:625.5px;width:24px;font-size:13.8px;">Φ</span>
<span class="t ser" style="left:662.8px;top:625.5px;width:24px;font-size:13.8px;">Χ</span>
<span class="t ser" style="left:686.8px;top:625.5px;width:24px;font-size:13.8px;">Ψ</span>
<span class="t ser" style="left:710.8px;top:625.5px;width:24px;font-size:13.8px;">Ω</span>
</div>
</body></html>
